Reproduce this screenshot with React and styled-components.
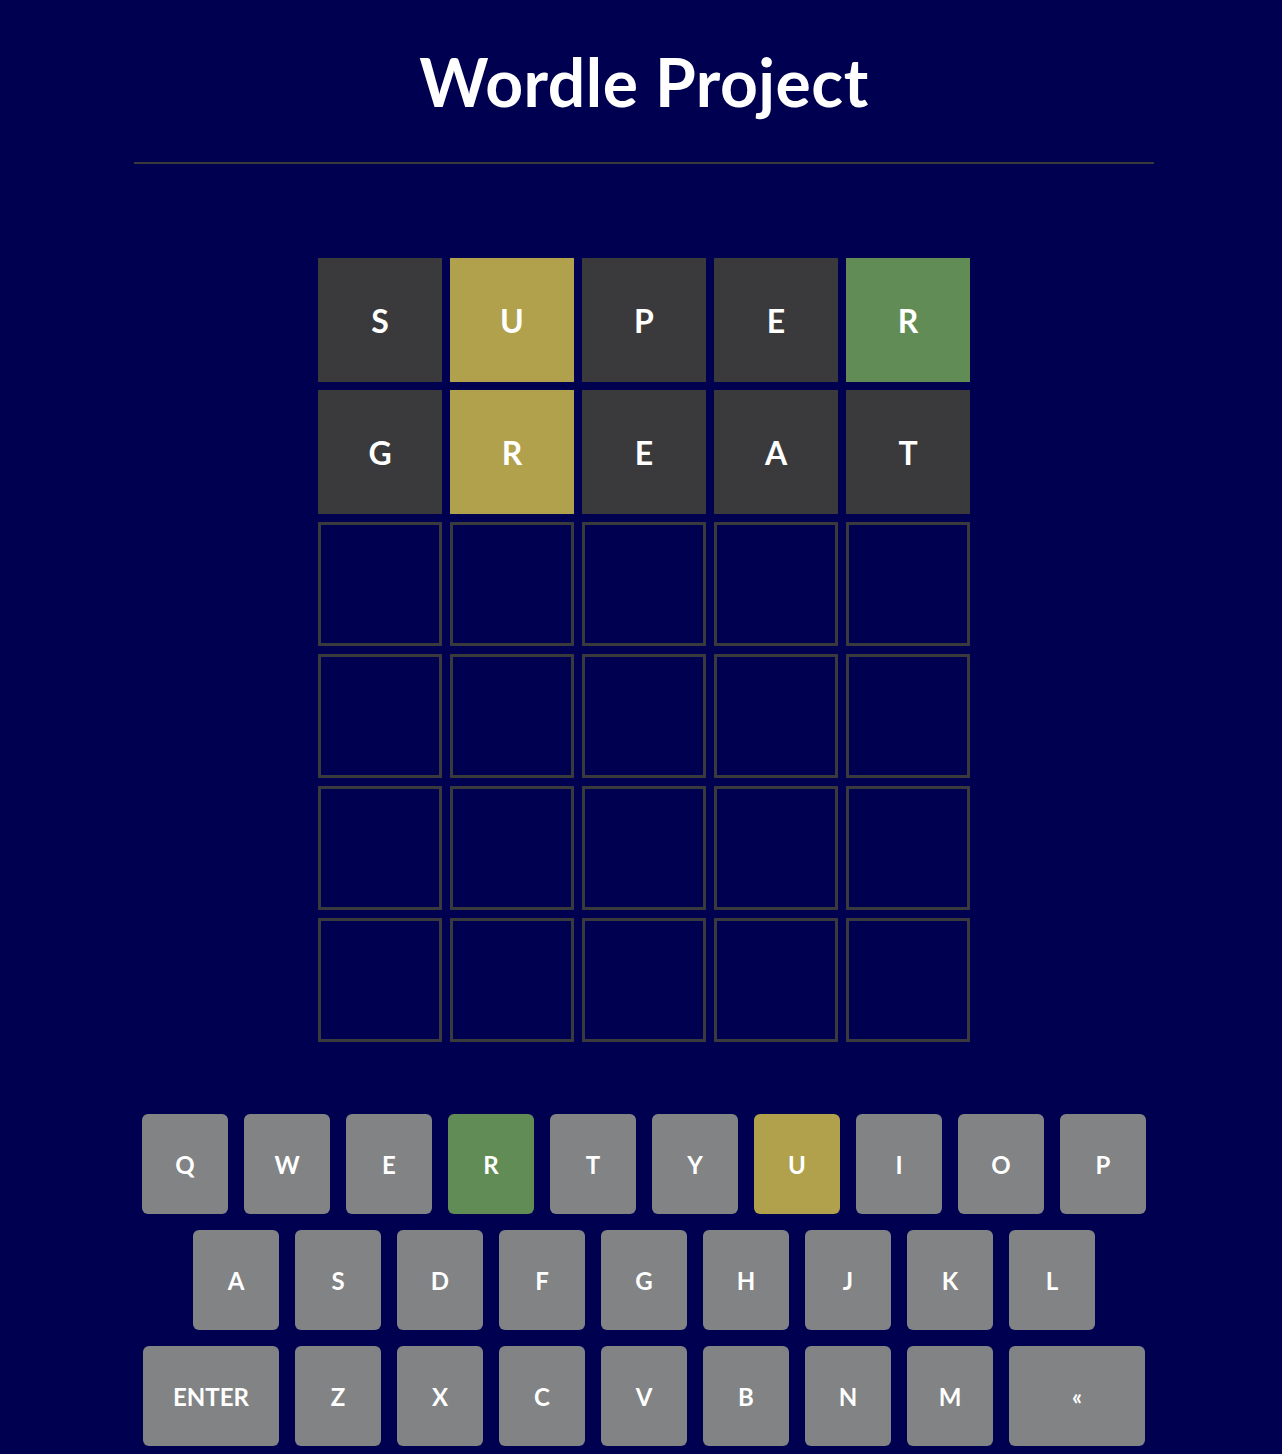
import React from "react";
import styled, { createGlobalStyle } from "styled-components";

const Global = createGlobalStyle`
  html, body { margin: 0; padding: 0; background: #000050; }
  body { font-family: "Lato", "DejaVu Sans", sans-serif; color: #fff; }
`;

const Page = styled.div`
  display: flex;
  flex-direction: column;
  align-items: center;
  padding-left: 6px;
  min-height: 1454px;
  box-sizing: border-box;
`;

const Header = styled.header`
  width: 1020px;
  border-bottom: 2px solid #3a3a3c;
  display: flex;
  justify-content: center;
  padding-top: 43px;
  height: 164px;
  box-sizing: border-box;
`;

const Title = styled.h1`
  margin: 0;
  font-size: 66px;
  line-height: 78px;
  font-weight: 700;
  letter-spacing: 0.5px;
`;

const Board = styled.div`
  margin-top: 94px;
  display: grid;
  grid-template-columns: repeat(5, 124px);
  grid-auto-rows: 124px;
  gap: 8px;
`;

const colors = {
  absent: "#3a3a3c",
  present: "#b1a04c",
  correct: "#618c55",
};

const Tile = styled.div`
  box-sizing: border-box;
  display: flex;
  align-items: center;
  justify-content: center;
  font-size: 32px;
  font-weight: 700;
  background: ${(p) => (p.$state ? colors[p.$state] : "transparent")};
  border: ${(p) => (p.$state ? "none" : "3px solid #3a3a3c")};
`;

const Keyboard = styled.div`
  margin-top: 72px;
  display: flex;
  flex-direction: column;
  align-items: center;
  gap: 16px;
`;

const KeyRow = styled.div`
  display: flex;
  gap: 16px;
`;

const Key = styled.button`
  width: ${(p) => (p.$wide ? "136px" : "86px")};
  height: 100px;
  border: none;
  border-radius: 6px;
  background: ${(p) => (p.$state ? colors[p.$state] : "#818384")};
  color: #fff;
  font-family: "Lato", "DejaVu Sans", sans-serif;
  font-weight: 700;
  font-size: ${(p) => (p.$small ? "22px" : "24px")};
  display: flex;
  align-items: center;
  justify-content: center;
  padding: 0;
`;

const guesses = [
  [["S", "absent"], ["U", "present"], ["P", "absent"], ["E", "absent"], ["R", "correct"]],
  [["G", "absent"], ["R", "present"], ["E", "absent"], ["A", "absent"], ["T", "absent"]],
];

const keyStates = { R: "correct", U: "present" };

const rows = [
  "QWERTYUIOP".split(""),
  "ASDFGHJKL".split(""),
  ["ENTER", ..."ZXCVBNM".split(""), "«"],
];

export default function App() {
  const tiles = [];
  for (let r = 0; r < 6; r++) {
    for (let c = 0; c < 5; c++) {
      const g = guesses[r] && guesses[r][c];
      tiles.push(
        <Tile key={`${r}-${c}`} $state={g ? g[1] : undefined}>
          {g ? g[0] : ""}
        </Tile>
      );
    }
  }
  return (
    <>
      <Global />
      <Page>
        <Header>
          <Title>Wordle Project</Title>
        </Header>
        <Board>{tiles}</Board>
        <Keyboard>
          {rows.map((row, i) => (
            <KeyRow key={i}>
              {row.map((k) => (
                <Key
                  key={k}
                  $wide={k.length > 1 || k === "«"}
                  $small={k === "«"}
                  $state={keyStates[k]}
                >
                  {k}
                </Key>
              ))}
            </KeyRow>
          ))}
        </Keyboard>
      </Page>
    </>
  );
}
